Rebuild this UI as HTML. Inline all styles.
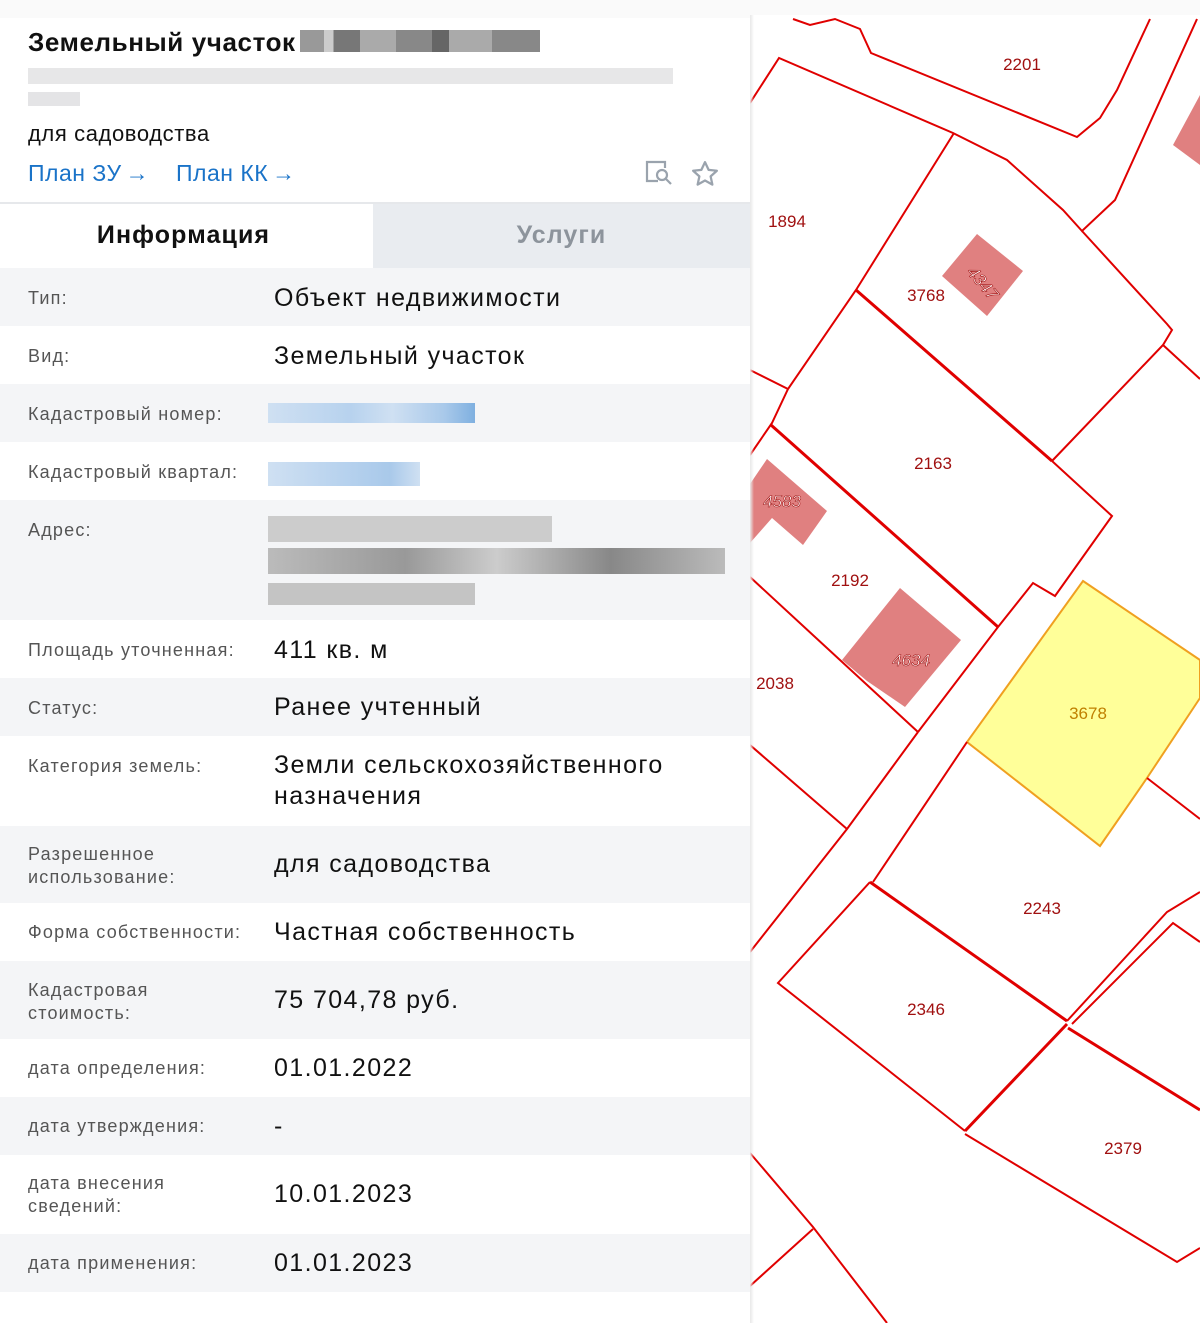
<!DOCTYPE html>
<html><head><meta charset="utf-8"><style>
*{margin:0;padding:0;box-sizing:border-box}
body{width:1200px;height:1323px;background:#fafafa;font-family:"Liberation Sans",sans-serif;position:relative;overflow:hidden}
#panel{position:absolute;left:0;top:18px;width:750px;height:1305px;background:#fff}
.abs{position:absolute}
.row{position:absolute;left:0;width:750px}
.g{background:#f4f5f7}
.lab{position:absolute;left:28px;font-size:18px;color:#555;line-height:23px;letter-spacing:1.2px}
.val{position:absolute;left:274px;font-size:25px;color:#111;line-height:31px;letter-spacing:1.4px}
.blk{position:absolute}
</style></head><body>
<svg class="abs" style="left:750px;top:15px" width="450" height="1308" viewBox="750 15 450 1308">
<rect x="750" y="15" width="450" height="1308" fill="#fff"/>
<g fill="#e08080">
<polygon points="977,234 1023,271 987,316 942,276"/>
<polygon points="767,459 827,511 803,545 772,518 750,543 750,484"/>
<polygon points="900,588 961,640 905,707 867,681 842,660"/>
<polygon points="1173,145 1200,95 1200,165"/>
</g>
<polygon points="1083,581 1200,660 1200,698 1147,778 1100,846 967,742" fill="#ffff99" stroke="#f0a020" stroke-width="2"/>
<g fill="none" stroke="#e00000" stroke-width="2">
<polyline points="793,19 810,25 835,19 860,29 871,53 1077,137 1100,118 1117,90 1150,19"/>
<polyline points="750,103 779,58 953,133 1007,160 1063,210 1082,231 1115,200 1197,19"/>
<polyline points="954,133 856,290 788,389 772,423 750,455"/>
<polyline points="750,370 788,389"/>
<polyline points="1082,231 1167,324 1172,330 1163,345 1052,461"/>
<polyline points="1163,345 1200,379"/>
<polyline points="856,290 1052,461" stroke-width="3"/>
<polyline points="1052,461 1112,516 1055,596 1033,583 998,627 918,732"/>
<polyline points="771,425 998,627" stroke-width="3"/>
<polyline points="750,577 918,732"/>
<polyline points="750,952 847,829 918,732"/>
<polyline points="750,745 847,829"/>
<polyline points="967,742 873,882"/>
<polyline points="1147,778 1200,819"/>
<polyline points="870,882 1067,1021" stroke-width="3"/>
<polyline points="870,882 778,983 965,1131"/>
<polyline points="965,1131 1067,1024" stroke-width="3"/>
<polyline points="1067,1021 1167,912 1200,892"/>
<polyline points="1072,1024 1173,923 1200,942"/>
<polyline points="1068,1028 1200,1110" stroke-width="3"/>
<polyline points="965,1134 1177,1262 1200,1248"/>
<polyline points="750,1153 813,1227 887,1323"/>
<polyline points="750,1286 813,1229"/>
</g>
<g font-family="Liberation Sans" font-size="17" fill="#a01010" text-anchor="middle">
<text x="1022" y="70">2201</text><text x="787" y="227">1894</text><text x="926" y="301">3768</text>
<text x="933" y="469">2163</text><text x="850" y="586">2192</text><text x="775" y="689">2038</text>
<text x="1088" y="719" fill="#c08000">3678</text><text x="1042" y="914">2243</text><text x="926" y="1015">2346</text><text x="1123" y="1154">2379</text>
</g>
<g font-family="Liberation Sans" font-size="17" fill="#fff" stroke="#a01010" stroke-width="0.6" text-anchor="middle" font-style="italic">
<text x="782" y="507">4583</text><text x="911" y="666">4634</text><text x="983" y="289" transform="rotate(50 983 283)">4347</text>
</g>
</svg>
<div class="abs" style="left:750px;top:15px;width:4px;height:1308px;background:linear-gradient(90deg,#e8e8e8,#fff0)"></div>
<div id="panel"></div>
<div class="abs" style="left:28px;top:27px;font-size:26px;font-weight:bold;color:#111;letter-spacing:0.6px">Земельный участок</div>
<div class="blk" style="left:300px;top:30px;width:240px;height:22px;background:linear-gradient(90deg,#999 0 10%,#ccc 10% 14%,#777 14% 25%,#aaa 25% 40%,#888 40% 55%,#666 55% 62%,#aaa 62% 80%,#888 80%)"></div>
<div class="blk" style="left:28px;top:68px;width:645px;height:16px;background:#e4e4e6;opacity:.9"></div>
<div class="blk" style="left:28px;top:92px;width:52px;height:14px;background:#e4e4e6"></div>
<div class="abs" style="left:28px;top:121px;font-size:22px;color:#111;letter-spacing:0.6px">для садоводства</div>
<div class="abs" style="left:28px;top:160px;font-size:23px;color:#1a73c8;letter-spacing:0.5px">План ЗУ<span style="margin-left:4px">→</span></div>
<div class="abs" style="left:176px;top:160px;font-size:23px;color:#1a73c8;letter-spacing:0.5px">План КК<span style="margin-left:4px">→</span></div>
<svg class="abs" style="left:644px;top:159px" width="32" height="30" viewBox="0 0 32 30" fill="none" stroke="#9aa3ad" stroke-width="2.2">
<path d="M14 22H3V3h18v6"/><circle cx="18" cy="16" r="5"/><path d="M22 20l5 5"/></svg>
<svg class="abs" style="left:690px;top:159px" width="30" height="30" viewBox="0 0 24 24" fill="none" stroke="#9aa3ad" stroke-width="1.8" stroke-linejoin="round">
<path d="M12 2.5l2.9 6.2 6.6.7-5 4.5 1.4 6.6L12 17.2l-5.9 3.3 1.4-6.6-5-4.5 6.6-.7z"/></svg>
<div class="abs" style="left:0;top:202px;width:750px;height:2px;background:#e6e8eb"></div>
<div class="abs" style="left:373px;top:204px;width:377px;height:64px;background:#e9ecf0"></div>
<div class="abs" style="left:0;top:221px;width:367px;text-align:center;font-size:25px;font-weight:bold;color:#111;letter-spacing:1.1px">Информация</div>
<div class="abs" style="left:373px;top:221px;width:377px;text-align:center;font-size:25px;font-weight:bold;color:#8d949c;letter-spacing:1.1px">Услуги</div>

<div class="row g" style="top:268px;height:58px"></div>
<div class="row g" style="top:384px;height:58px"></div>
<div class="row g" style="top:500px;height:120px"></div>
<div class="row g" style="top:678px;height:58px"></div>
<div class="row g" style="top:826px;height:77px"></div>
<div class="row g" style="top:961px;height:78px"></div>
<div class="row g" style="top:1097px;height:58px"></div>
<div class="row g" style="top:1234px;height:58px"></div>

<div class="lab" style="top:287px">Тип:</div><div class="val" style="top:283px">Объект недвижимости</div>
<div class="lab" style="top:345px">Вид:</div><div class="val" style="top:341px">Земельный участок</div>
<div class="lab" style="top:403px">Кадастровый номер:</div>
<div class="blk" style="left:268px;top:403px;width:207px;height:20px;background:linear-gradient(90deg,#cfe0f2,#b7d2ee 40%,#cfe0f2 60%,#a9c9ea 85%,#7fb0e0)"></div>
<div class="lab" style="top:461px">Кадастровый квартал:</div>
<div class="blk" style="left:268px;top:462px;width:152px;height:24px;background:linear-gradient(90deg,#cfe0f2,#b7d2ee 50%,#a9c9ea 80%,#cfe0f2)"></div>
<div class="lab" style="top:519px">Адрес:</div>
<div class="blk" style="left:268px;top:516px;width:284px;height:26px;background:#ccc"></div>
<div class="blk" style="left:268px;top:548px;width:457px;height:26px;background:linear-gradient(90deg,#bbb,#999 30%,#ccc 50%,#888 75%,#bbb)"></div>
<div class="blk" style="left:268px;top:583px;width:207px;height:22px;background:#c4c4c4"></div>
<div class="lab" style="top:639px">Площадь уточненная:</div><div class="val" style="top:635px">411 кв. м</div>
<div class="lab" style="top:697px">Статус:</div><div class="val" style="top:692px">Ранее учтенный</div>
<div class="lab" style="top:755px">Категория земель:</div><div class="val" style="top:750px">Земли сельскохозяйственного<br>назначения</div>
<div class="lab" style="top:843px">Разрешенное<br>использование:</div><div class="val" style="top:849px">для садоводства</div>
<div class="lab" style="top:921px">Форма собственности:</div><div class="val" style="top:917px">Частная собственность</div>
<div class="lab" style="top:979px">Кадастровая<br>стоимость:</div><div class="val" style="top:985px">75 704,78 руб.</div>
<div class="lab" style="top:1057px">дата определения:</div><div class="val" style="top:1053px">01.01.2022</div>
<div class="lab" style="top:1115px">дата утверждения:</div><div class="val" style="top:1111px">-</div>
<div class="lab" style="top:1172px">дата внесения<br>сведений:</div><div class="val" style="top:1179px">10.01.2023</div>
<div class="lab" style="top:1252px">дата применения:</div><div class="val" style="top:1248px">01.01.2023</div>
</body></html>
